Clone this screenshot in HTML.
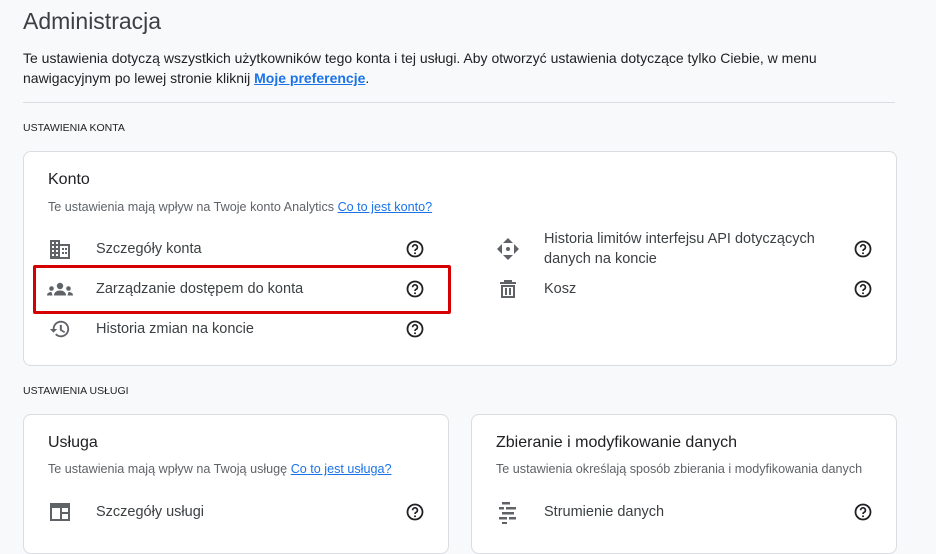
<!DOCTYPE html>
<html><head><meta charset="utf-8"><style>
*{box-sizing:border-box;margin:0;padding:0}
body{width:936px;height:533px;overflow:hidden;background:#f8f9fa;font-family:"Liberation Sans",sans-serif;color:#202124;position:relative}
.a{position:absolute;white-space:nowrap}
h1{position:absolute;left:23px;top:8px;font-size:23px;font-weight:400;color:#3c4043}
.p{left:23px;font-size:14px;color:#202124}
a{color:#1a73e8;text-decoration:underline}
.hr{position:absolute;left:23px;top:102px;width:872px;height:1px;background:#dadce0}
.sec{left:23px;font-size:10.5px;color:#202124}
.card{position:absolute;background:#fff;border:1px solid #dadce0;border-radius:8px}
.ct{font-size:16px;color:#202124}
.cs{font-size:12.6px;color:#5f6368}
.row{font-size:14.5px;color:#3c4043}
.ic{position:absolute}
.red{position:absolute;left:33px;top:265px;width:418px;height:49px;border:3px solid #d50000;border-radius:2px}
</style></head><body>
<h1>Administracja</h1>
<div class="a p" style="top:50px">Te ustawienia dotyczą wszystkich użytkowników tego konta i tej usługi. Aby otworzyć ustawienia dotyczące tylko Ciebie, w menu</div>
<div class="a p" style="top:70px">nawigacyjnym po lewej stronie kliknij <a style="font-weight:bold">Moje preferencje</a>.</div>
<div class="hr"></div>
<div class="a sec" style="top:122px">USTAWIENIA KONTA</div>
<div class="card" style="left:23px;top:151px;width:874px;height:215px"></div>
<div class="a ct" style="left:48px;top:171px">Konto</div>
<div class="a cs" style="left:48px;top:200px">Te ustawienia mają wpływ na Twoje konto Analytics <a>Co to jest konto?</a></div>

<svg class="ic" style="left:48px;top:239px" width="24" height="20" viewBox="0 0 24 20"><path fill="#5f6368" d="M2 1h10v4h10v15H2z"/><g fill="#fff"><rect x="4" y="3" width="2" height="2"/><rect x="8" y="3" width="2" height="2"/><rect x="4" y="7" width="2" height="2"/><rect x="8" y="7" width="2" height="2"/><rect x="4" y="11" width="2" height="2"/><rect x="8" y="11" width="2" height="2"/><rect x="4" y="15" width="2" height="2"/><rect x="8" y="15" width="2" height="2"/><rect x="12" y="7" width="8" height="11"/></g><g fill="#5f6368"><rect x="14" y="9" width="2" height="2"/><rect x="14" y="13" width="2" height="2"/><rect x="17" y="9" width="2" height="2"/><rect x="17" y="13" width="2" height="2"/></g></svg>
<div class="a row" style="left:96px;top:241px">Szczegóły konta</div>
<svg class="ic" style="left:47px;top:282px" width="26" height="14" viewBox="0 0 26 14"><g fill="#5f6368"><circle cx="13" cy="4" r="3.2"/><path d="M7 13.5c0-3.5 3-5 6-5s6 1.5 6 5z"/><circle cx="4.5" cy="6.5" r="2.3"/><path d="M0 13.5c0-2.5 2-3.5 4.5-3.5L5.5 13.5z"/><circle cx="21.5" cy="6.5" r="2.3"/><path d="M26 13.5c0-2.5-2-3.5-4.5-3.5L20.5 13.5z"/></g></svg>
<div class="a row" style="left:96px;top:281px">Zarządzanie dostępem do konta</div>
<svg class="ic" style="left:49px;top:318px" width="22" height="22" viewBox="0 0 24 24"><path fill="#5f6368" d="M13 3a9 9 0 0 0-9 9H1l3.9 3.9L9 12H6a7 7 0 1 1 2.05 4.95l-1.42 1.42A9 9 0 1 0 13 3zm-1.2 4.5v6l4.8 2.9 1-1.6-3.6-2.1V7.5z"/></svg>
<div class="a row" style="left:96px;top:321px">Historia zmian na koncie</div>

<svg class="ic" style="left:497px;top:238px" width="22" height="22" viewBox="0 0 22 22"><g fill="#5f6368"><path d="M11 0l5 5H6z"/><path d="M11 22l5-5H6z"/><path d="M0 11l5-5v10z"/><path d="M22 11l-5-5v10z"/><circle cx="11" cy="11" r="2"/></g></svg>
<div class="a row" style="left:544px;top:231px">Historia limitów interfejsu API dotyczących</div>
<div class="a row" style="left:544px;top:251px">danych na koncie</div>
<svg class="ic" style="left:499px;top:279px" width="18" height="20" viewBox="0 0 18 20"><path fill="#5f6368" d="M5 1h8v2h4v2H1V3h4zM2 6h14v13H2zm2 2v9h10V8zm2 1h2v7H6zm4 0h2v7h-2z"/></svg>
<div class="a row" style="left:544px;top:281px">Kosz</div>

<div class="red"></div>

<div class="a sec" style="top:385px">USTAWIENIA USŁUGI</div>
<div class="card" style="left:23px;top:414px;width:426px;height:140px"></div>
<div class="card" style="left:471px;top:414px;width:426px;height:140px"></div>
<div class="a ct" style="left:48px;top:434px">Usługa</div>
<div class="a cs" style="left:48px;top:462px">Te ustawienia mają wpływ na Twoją usługę <a>Co to jest usługa?</a></div>
<svg class="ic" style="left:50px;top:503px" width="20" height="18" viewBox="0 0 20 18"><path fill="#5f6368" d="M0 0h20v18H0z"/><path fill="#fff" d="M2 5h8v11H2zM12 5h6v4h-6zM12 11h6v5h-6z"/></svg>
<div class="a row" style="left:96px;top:504px">Szczegóły usługi</div>
<div class="a ct" style="left:496px;top:434px">Zbieranie i modyfikowanie danych</div>
<div class="a cs" style="left:496px;top:462px">Te ustawienia określają sposób zbierania i modyfikowania danych</div>
<svg class="ic" style="left:499px;top:502px" width="18" height="22" viewBox="0 0 18 22"><g fill="#5f6368"><rect x="3" y="0" width="8" height="2.5"/><rect x="0" y="5" width="5" height="2.5"/><rect x="7" y="5" width="10" height="2.5"/><rect x="3" y="10" width="12" height="2.5"/><rect x="0" y="15" width="8" height="2.5"/><rect x="10" y="15" width="7" height="2.5"/><rect x="3" y="20" width="5" height="2"/></g></svg>
<div class="a row" style="left:544px;top:504px">Strumienie danych</div>

<svg width="0" height="0" style="position:absolute"><defs><g id="q"><circle cx="9" cy="9" r="7.5" fill="none" stroke="#202124" stroke-width="1.8"/><path d="M6.6 7.2a2.4 2.4 0 1 1 3.4 2.2c-.7.4-1 .8-1 1.6" fill="none" stroke="#202124" stroke-width="1.7"/><circle cx="9" cy="13.2" r="1" fill="#202124"/></g></defs></svg>
<svg class="ic" style="left:406px;top:240px" width="18" height="18"><use href="#q"/></svg>
<svg class="ic" style="left:406px;top:280px" width="18" height="18"><use href="#q"/></svg>
<svg class="ic" style="left:406px;top:320px" width="18" height="18"><use href="#q"/></svg>
<svg class="ic" style="left:854px;top:240px" width="18" height="18"><use href="#q"/></svg>
<svg class="ic" style="left:854px;top:280px" width="18" height="18"><use href="#q"/></svg>
<svg class="ic" style="left:406px;top:503px" width="18" height="18"><use href="#q"/></svg>
<svg class="ic" style="left:854px;top:503px" width="18" height="18"><use href="#q"/></svg>
</body></html>
